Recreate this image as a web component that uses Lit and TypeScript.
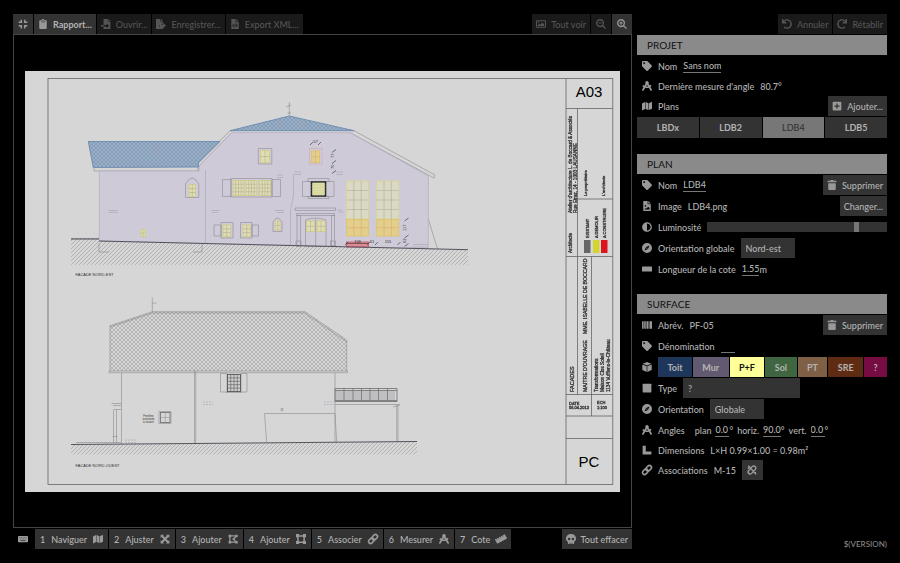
import { LitElement, html, svg, css, nothing } from "lit";
import { customElement, property, state } from "lit/decorators.js";
import { classMap } from "lit/directives/class-map.js";

const undoShape = svg`<path transform="scale(.03125)" d="M212.333 224.333H12c-6.627 0-12-5.373-12-12V12C0 5.373 5.373 0 12 0h48c6.627 0 12 5.373 12 12v78.112C117.773 39.279 184.26 7.47 258.175 8.007c136.906.994 246.448 111.623 246.157 248.532C504.041 393.258 393.12 504 256.333 504c-64.089 0-122.496-24.313-166.51-64.215-5.099-4.622-5.334-12.554-.467-17.42l33.967-33.967c4.474-4.474 11.662-4.717 16.401-.525C170.76 415.336 211.58 432 256.333 432c97.268 0 176-78.716 176-176 0-97.267-78.716-176-176-176-58.496 0-110.28 28.476-142.274 72.333h98.274c6.627 0 12 5.373 12 12v48c0 6.627-5.373 12-12 12z"/>`;

const ICONS: Record<string, unknown> = {
  compress: svg`<path d="M4 1h2.500v5.500H1V4h3zM9.500 1H12v3h3v2.500H9.500zM1 9.500h5.500V15H4v-3H1zM9.500 9.500H15V12h-3v3H9.500z"/>`,
  clipboard: svg`<path fill-rule="evenodd" d="M3.500 2H6a2 2 0 0 1 4 0h2.500A1.500 1.500 0 0 1 14 3.500v11a1.500 1.500 0 0 1-1.500 1.500h-9A1.500 1.500 0 0 1 2 14.500v-11A1.500 1.500 0 0 1 3.500 2zM8 1.300a.8.8 0 1 0 0 1.600.8.8 0 0 0 0-1.600zM5 4v1h6V4z"/>`,
  open: svg`<path fill-rule="evenodd" d="M4 0h7v4h4v12H4v-4h5v2.500L13 11 9 7v2.500H4zM12 0l3 3h-3zM0 9.500h4V12H0z"/>`,
  save: svg`<path fill-rule="evenodd" d="M0 0h7v4h4v3H9.500v2.500H5V12h6v4H0zM8 0l3 3H8zM11 6l5 4.500-5 4.500v-3H6V9.500h5z"/>`,
  code: svg`<path fill-rule="evenodd" d="M2 0h7v5h5v11H2zM10 0l4 4h-4zM6 7.500 3.500 10.300 6 13l.9-.9-1.700-1.800 1.700-1.800zm4 0-.9 1 1.700 1.800-1.700 1.800.9.900 2.500-2.700zM8.200 7 7 13.500l.9.200L9.100 7.200z"/>`,
  image: svg`<path fill-rule="evenodd" d="M1.500 2h13A1.500 1.500 0 0 1 16 3.500v9a1.500 1.500 0 0 1-1.500 1.500h-13A1.500 1.500 0 0 1 0 12.500v-9A1.500 1.500 0 0 1 1.500 2zM1.700 3.700v8.600h12.600V3.700zM3 11V9.500l2-2 1.500 1.500 3.500-3.500 3 3V11zM4.300 4.500a1.200 1.200 0 1 1 0 2.400 1.200 1.200 0 0 1 0-2.400z"/>`,
  zoomOut: svg`<path fill-rule="evenodd" d="M6.500 0a6.500 6.500 0 0 1 5.200 10.400L16 14.600 14.600 16l-4.300-4.200A6.500 6.500 0 1 1 6.500 0zm0 2.300a4.200 4.200 0 1 0 0 8.400 4.200 4.200 0 0 0 0-8.400zM4 5.700h5v1.600H4z"/>`,
  zoomIn: svg`<path fill-rule="evenodd" d="M6.500 0a6.500 6.500 0 0 1 5.200 10.400L16 14.600 14.600 16l-4.300-4.200A6.500 6.500 0 1 1 6.500 0zm0 2.300a4.200 4.200 0 1 0 0 8.400 4.200 4.200 0 0 0 0-8.400zM5.700 4h1.600v1.700H9v1.600H7.300V9H5.700V7.300H4V5.700h1.700z"/>`,
  undo: undoShape,
  redo: svg`<g transform="matrix(-1 0 0 1 16 0)">${undoShape}</g>`,
  tag: svg`<path transform="scale(.03125)" d="M0 252.118V48C0 21.490 21.490 0 48 0h204.118a48 48 0 0 1 33.941 14.059l211.882 211.882c18.745 18.745 18.745 49.137 0 67.882L293.823 497.941c-18.745 18.745-49.137 18.745-67.882 0L14.059 286.059A48 48 0 0 1 0 252.118zM112 64c-26.510 0-48 21.490-48 48s21.490 48 48 48 48-21.490 48-48-21.490-48-48-48z"/>`,
  drafting: svg`<path d="M8 0a2.900 2.900 0 0 1 2.500 4.300l1.700 3 1.700-1.300 1.500 1.700-2 1.700 2.400 4.300-.3 2.300-2.100-.9-2.500-4.300a8 8 0 0 1-5.800 0l-2.500 4.300-2.100.9-.3-2.300 2.200-3.900L.5 8.300 1.900 6.500l1.900 1 1.700-3.200A2.900 2.900 0 0 1 8 0zM6.400 8.600a6 6 0 0 0 3.200 0L8 5.800z"/>`,
  map: svg`<path d="M0 4 4.900 1.500v11.300L0 15zM5.700 1.500l4.600 1.900v11.100l-4.600-1.800zM11.100 3.400 16 1v11.300l-4.900 2.200z"/>`,
  plus: svg`<path fill-rule="evenodd" d="M2.500 1h11A1.500 1.500 0 0 1 15 2.500v11a1.500 1.500 0 0 1-1.500 1.500h-11A1.500 1.500 0 0 1 1 13.500v-11A1.500 1.500 0 0 1 2.500 1zM7 4v3H4v2h3v3h2V9h3V7H9V4z"/>`,
  trash: svg`<path d="M2 5h12v9.500a1.500 1.500 0 0 1-1.500 1.500h-9A1.500 1.500 0 0 1 2 14.500zM1 1h4.200L6 0h4l.8 1H15v2.500H1z"/>`,
  fileImage: svg`<path fill-rule="evenodd" d="M2 0h7v5h5v11H2zM10 0l4 4h-4zM5.500 6.500a1.300 1.300 0 1 0 0 2.600 1.300 1.300 0 0 0 0-2.600zM4 13.500h8V11l-2-2-3.500 3.300L5.500 11.500 4 12.700z"/>`,
  adjust: svg`<path transform="scale(.03125)" d="M8 256c0 136.966 111.033 248 248 248s248-111.034 248-248S392.966 8 256 8 8 119.033 8 256zm248 184V72c101.705 0 184 82.311 184 184 0 101.705-82.311 184-184 184z"/>`,
  compass: svg`<path fill-rule="evenodd" d="M8 0a8 8 0 1 1 0 16A8 8 0 0 1 8 0zm4 4L6.500 6.500 4 12l5.500-2.500zM8 7a1 1 0 1 1 0 2 1 1 0 0 1 0-2z"/>`,
  ruler: svg`<path d="M1 4h14a1 1 0 0 1 1 1v6a1 1 0 0 1-1 1H1a1 1 0 0 1-1-1V5a1 1 0 0 1 1-1z"/>`,
  barcode: svg`<path d="M0 2h1.500v12H0zM2.200 2h2.300v12H2.200zM5.200 2h1.500v12H5.200zM7.400 2h2.300v12H7.400zM10.400 2h1.600v12h-1.600zM12.700 2H16v12h-3.300z"/>`,
  cube: svg`<path d="M8 0 15 2.700 8 5.500 1 2.700zM.5 3.800 7.500 6.600v9.200L.5 12.800zM15.500 3.800v9l-7 3V6.600z"/>`,
  square: svg`<path d="M2 1h12a1 1 0 0 1 1 1v12a1 1 0 0 1-1 1H2a1 1 0 0 1-1-1V2a1 1 0 0 1 1-1z"/>`,
  angle: svg`<path d="M1 1h5v9.500h9V15H1z"/>`,
  link: svg`<g fill="none" stroke="currentColor" stroke-width="2.600" transform="rotate(-45 8 8)"><rect x="-.8" y="4.700" width="9.800" height="6.600" rx="3.300"/><rect x="7" y="4.700" width="9.800" height="6.600" rx="3.300"/></g>`,
  unlink: svg`<g fill="none" stroke="currentColor" stroke-width="2.300"><path d="M6 5.200 8.600 2.600a3.100 3.100 0 0 1 4.600 0 3.200 3.200 0 0 1 0 4.600L10.700 9.700M10 10.700l-2.600 2.700a3.200 3.200 0 0 1-4.600-4.600l2.500-2.500M2 1l12.500 14M11 12.500h3.500M2.500 3.500v3"/></g>`,
  keyboard: svg`<path fill-rule="evenodd" d="M1 3h14a1 1 0 0 1 1 1v8a1 1 0 0 1-1 1H1a1 1 0 0 1-1-1V4a1 1 0 0 1 1-1zM2 5v1h1V5zm2.700 0v1h1V5zm2.700 0v1h1V5zM10 5v1h1V5zm2.800 0v1h1V5zM3.400 7.400v1h1v-1zm2.700 0v1h1v-1zm2.700 0v1h1v-1zm2.700 0v1h1v-1zM4 9.900v1h8v-1z"/>`,
  expand: svg`<path d="M1 1h5.500L4.900 2.600 8 5.700l3.100-3.100L9.500 1H15v5.500l-1.600-1.600L10.300 8l3.100 3.100L15 9.500V15H9.500l1.600-1.600L8 10.300l-3.100 3.100L6.500 15H1V9.500l1.600 1.600L5.700 8 2.600 4.900 1 6.500z"/>`,
  polygon: svg`<path d="M3 4v8M4 3h8M4 13h8M12.500 4 9 8l3.500 4.500" fill="none" stroke="currentColor" stroke-width="2"/><path d="M1 1h4v4H1zM11.500 1h4v4h-4zM1 11h4v4H1zM11.500 11h4v4h-4zM7.500 6.500h3v3h-3z"/>`,
  vector: svg`<path d="M3 3h10v10H3z" fill="none" stroke="currentColor" stroke-width="2.400"/><path d="M0 0h5v5H0zM11 0h5v5h-5zM0 11h5v5H0zM11 11h5v5h-5z"/>`,
  rulerTilt: svg`<path transform="rotate(-28 8 8)" d="M-1 4h2.600v2h1.200V4h2.300v2h1.200V4h2.300v2h1.200V4h2.300v2h1.200V4H17v8H-1z"/>`,
  skull: svg`<path fill-rule="evenodd" d="M8 0c4.500 0 8 3.100 8 7 0 2.300-1.200 4.200-3 5.500V15a1 1 0 0 1-1 1h-1.700v-2H9v2H7v-2H5.700v2H4a1 1 0 0 1-1-1v-2.500C1.200 11.200 0 9.300 0 7c0-3.900 3.500-7 8-7zM5 6a2 2 0 1 0 0 4 2 2 0 0 0 0-4zm6 0a2 2 0 1 0 0 4 2 2 0 0 0 0-4z"/>`,
};

const icon = (name: string) =>
  html`<svg class="icon" viewBox="0 0 16 16" aria-hidden="true">${ICONS[name]}</svg>`;

/* Window with a regular grid of glazing bars. */
const pane = (x: number, y: number, w: number, h: number, cols: number, rows: number, kind = "") => {
  let d = "";
  for (let c = 1; c < cols; c++) d += `M${x + (w * c) / cols} ${y}v${h}`;
  for (let r = 1; r < rows; r++) d += `M${x} ${y + (h * r) / rows}h${w}`;
  return svg`<rect class="pane ${kind}" x=${x} y=${y} width=${w} height=${h} /><path class="bars ${kind}" d=${d} />`;
};

const up = (x: number, y: number, size: number, text: string, cls = "") =>
  svg`<text class="up ${cls}" font-size=${size} transform="translate(${x} ${y}) rotate(-90)">${text}</text>`;

@customElement("facade-sheet")
export class FacadeSheet extends LitElement {
  static styles = css`
    :host { display: block; }
    svg { display: block; width: 100%; height: auto; font-family: "Liberation Sans", Arial, sans-serif; }
    .paper { fill: #d6d6d6; }
    .frame { fill: none; stroke: #666; stroke-width: 0.8; }
    .line { fill: none; stroke: #8c8c90; stroke-width: 0.6; }
    .soft { fill: none; stroke: #a5a3b0; stroke-width: 0.6; }
    .rail { fill: none; stroke: #777; stroke-width: 0.9; }
    .ground { fill: none; stroke: #55525c; stroke-width: 1; }
    .wall { fill: #cfcad7; stroke: #aca4be; stroke-width: 0.6; }
    .roof { fill: #9bafc6; stroke: #5f83aa; stroke-width: 0.8; }
    .pane { fill: #deddb4; stroke: #d2cd86; stroke-width: 0.9; }
    .pane.orange { fill: #e2cf8b; stroke: #dfc46c; }
    .pane.pale { fill: #d9d9c4; stroke: #dcd698; }
    .pane.active { fill: #e2e2b0; stroke: #222; stroke-width: 1.4; }
    .pane.plain { fill: #d6d6d6; stroke: #777; }
    .pane.dark { fill: #d0d0d0; stroke: #555; }
    .bars { fill: none; stroke: #a9a88e; stroke-width: 0.5; }
    .bars.active { stroke: #cbcb8a; }
    .bars.orange { stroke: #e0a070; }
    .bars.dark { stroke: #666; stroke-width: 0.7; }
    .bars.plain { stroke: #888; }
    .pink { fill: none; stroke: #d0aebb; stroke-width: 0.7; }
    .red { fill: #e08a94; stroke: #c25060; stroke-width: 0.8; }
    .dim { fill: none; stroke: #444; stroke-width: 0.7; }
    text { fill: #333; }
    .title { fill: #000; font-size: 15px; text-anchor: middle; }
    .caption { font-size: 4px; }
    .note { font-size: 3px; text-anchor: middle; }
    .num { font-size: 4px; text-anchor: middle; }
    .faded { filter: blur(0.5px); }
    .faded text { stroke: #333; stroke-width: 0.3; }
  `;

  render() {
    return html`<svg viewBox="25 71 595 421" role="img" aria-label="Façades nord-est et nord-ouest">
      <defs>
        <pattern id="tiles" width="4" height="4" patternUnits="userSpaceOnUse">
          <path d="M0 0l4 4M4 0l-4 4" stroke="#7390b0" stroke-width=".6" />
        </pattern>
        <pattern id="slates" width="4" height="4" patternUnits="userSpaceOnUse">
          <path d="M0 0l4 4M4 0l-4 4" stroke="#a0a0a0" stroke-width=".6" />
        </pattern>
        <pattern id="earth" width="4" height="4" patternUnits="userSpaceOnUse">
          <path d="M0 4l4-4" stroke="#999" stroke-width=".6" />
        </pattern>
      </defs>
      <rect class="paper" x="25" y="71" width="595" height="421" />
      <rect class="frame" x="48" y="78.500" width="564.800" height="406" />
      <path class="frame" d="M566 78.500V484.500M566 108.500H612.800M577.500 108.500V394.500M577.500 199H612.800M566 256.500H612.800M591.500 256.500V416M566 394.500H612.800M566 416H612.800M566 438.500H612.800" />
      <text class="title" x="589" y="97">A03</text>
      <text class="title" x="589" y="466.500">PC</text>

      <g class="faded">
        ${up(571.5, 213, 4.700, "Atelier d'architecture L. de Boccard & Associés")}
        ${up(576.5, 213, 4.700, "Rue Etraz, 14 - 1003 LAUSANNE")}
        ${up(571.5, 253, 4.500, "Architecte")}
        ${up(587, 196, 4, "Le propriétaire")}
        ${up(605, 196, 4, "L'architecte")}
        ${up(589, 238, 4, "EXISTANT")}
        ${up(597.5, 238, 4, "A DEMOLIR")}
        ${up(606, 238, 4, "A CONSTRUIRE")}
        ${up(574, 392, 5.500, "FACADES")}
        ${up(586.5, 392, 5.200, "MAITRE D'OUVRAGE")}
        ${up(586.5, 334, 5.200, "MME. ISABELLE DE BOCCARD")}
        ${up(598, 392, 4.700, "Transformations")}
        ${up(604, 392, 4.700, "Maison Clos Soleil")}
        ${up(610, 392, 4.700, "1134 Vufflens-le-Château")}
        <text x="569" y="404.500" font-size="4">DATE</text>
        <text x="569" y="409" font-size="4">06.04.2013</text>
        <text x="597" y="404" font-size="4">ECH</text>
        <text x="597" y="408.500" font-size="4">1:100</text>
        <rect x="584" y="240" width="6.500" height="13" fill="#666" />
        <rect x="593" y="240" width="6.500" height="13" fill="#d4d431" />
        <rect x="601" y="240" width="6.500" height="13" fill="#dc1420" />
      </g>

      <path d="M71 239H99V241L468 250V264.700H71z" fill="url(#earth)" />
      <path class="line" d="M94 168V171H199V166L231.700 132.700M230 130.700 198 163V171M350 132.700 434 178 435 175 354 130.700M428.300 219 437.500 249M289.300 102V116M286 107l5-2M287.500 113h3.500M99 243v9h10M202 243v9h-9" />
      <path class="wall" d="M99.300 171H199V166L231.700 132.700H350L428.300 176V248.500L99.300 241z" />
      ${["M88.300 141.500H220L198.300 163V167L93.300 167.500z", "M230 130.700 289.300 116 354 130.700z"].map(
        (d) => svg`<path class="roof" d=${d} /><path d=${d} fill="url(#tiles)" />`,
      )}
      <path class="soft" d="M205.500 170V243M293.500 174.500V195L290.500 210V246M153 148h7v5h-7zM277 121h7v5h-7zM298 121h7v5h-7zM108 210.500h10M109 212.500h9M211 210.500h9M212 212.500h6M275 210.500h9M277 212.500h7M277 175h6M277 177.500h6M294 172h7M294 174.500h7M336 172h7M336 174.500h7M337 210h5M338 212h6M413 244.500h15M413 247h15" />
      <path class="line" d="M71 238.500H99M258.300 148.500h13.500v15.500h-13.500zM231 178.500h41V197H231zM222.500 179.500H231v17h-8.500zM272 179.500h8.500v17H272zM185.500 197.500V184q6.700-12 13.300 0v13.500zM221 222.500h12V238h-12zM214 225h7v11h-7zM240.500 222.500h11.500V238h-11.500zM252 225h6.500v11H252zM273 231.500V222q4.500-8 9 0v9.500zM302.500 181.500H311v15h-8.500zM326 181.500h8v15h-8zM308 178.500h21v3h-21zM308 196.500h21v2h-21zM295 208h40.500v2.500H295zM296.500 213.500h38v2h-38zM297 215.500h3.500V246H297zM331.500 215.500h3V246h-3zM296 241h5v5h-5zM330.500 241h5v5h-5zM305.500 246.500V220q10-4 20.500 0v26.500zM315.700 219v28" />
      ${pane(260.5, 150.500, 9, 12, 2, 2)} ${pane(233, 180.500, 11, 15, 4, 4)}
      ${pane(246, 180.500, 11, 15, 4, 4)} ${pane(259.5, 180.500, 11, 15, 4, 4)}
      ${pane(189, 184.500, 6.500, 12, 2, 3)} ${pane(140.5, 229.500, 5, 7, 2, 2)}
      ${pane(223, 225, 7.500, 11.500, 2, 3)} ${pane(243, 225, 7.500, 11.500, 2, 3)}
      ${pane(275.5, 221, 4.500, 9, 2, 2)} ${pane(306.5, 221, 8, 10.500, 2, 2)}
      ${pane(317, 221, 8, 10.500, 2, 2)}
      <rect class="pink" x="309.500" y="148.500" width="12.500" height="15.500" />
      ${pane(311.5, 151, 8, 11.500, 2, 2, "orange")}
      ${pane(311.5, 182, 14, 14, 5, 5, "active")}
      ${pane(346.5, 181, 22, 38, 3, 4, "pale")} ${pane(346.5, 219.500, 22, 16.500, 3, 2, "orange")}
      ${pane(376.7, 181, 22, 38, 3, 4, "pale")} ${pane(376.7, 219.500, 22, 16.500, 3, 2, "orange")}
      <rect class="red" x="346.500" y="242" width="22" height="5" />
      <path class="dim" d="M346.500 243.500h22M345 245l3-3M367 245l3-3M375 245l3-3M397.500 245l3-3M310 145l3-3M318 145l3-3M332 152.500l4-3M332 163.500l4-3M332 173.500l4-3M404.500 221l4-3M404.500 238l4-3M404.500 246.500l4-3" />
      <text class="num" x="315.500" y="143">57</text>
      <text class="num" x="357.500" y="242.500">158</text>
      <text class="num" x="372" y="242.500">61</text>
      <text class="num" x="388" y="242.500">155</text>
      ${up(333.5, 158, 4, "77")} ${up(333.5, 169, 4, "70")}
      ${up(405.5, 231, 4, "117")} ${up(405.5, 243, 4, "62")}
      <path class="ground" d="M71 239H99M99 241 468 249.700" />
      <text class="caption" x="75.500" y="275.700">FACADE NORD-EST</text>

      <path d="M71 444.500 195 443.500 417 441.500V454.500H71z" fill="url(#earth)" />
      <path d="M110 325.700 152.300 311.700H305L346.700 340V371H110z" fill="url(#slates)" />
      <path class="line" d="M110 371V325.700L152.300 311.700H305L346.700 340V371M110 327 152.300 313H304.500L346.700 342M109 371H347.500V372.700H109zM152.300 297.500V312M152.300 303h4M121.500 373V444M194.500 371V443.500M195.700 371V443.500M335 373V442.300M220.500 373.500h6.500v18.500h-6.500zM241 373.500h6v18.500h-6zM226 392.500h16M264.500 413.500H335M264.500 413.500 266.700 442M335 413.500 336.700 442M281 408.500h2v2h-2zM111.500 403.500H121.500M113 405.500h8M113.500 409.500h8M113.500 410V443M116.500 410V443M112.500 436.500h5M76 442.500H121M335 404.500H400M396.700 405V441M398 405V441M393 407l7-2" />
      <path class="soft" d="M203 402h10M203 404.500h10M324 402h10M324 404.500h10M125 440h11M125 442.500h11" stroke-dasharray="2 1" />
      ${pane(227.5, 374.500, 13, 17, 4, 5, "dark")} ${pane(160.5, 412.500, 9.500, 10, 2, 2, "plain")}
      <path class="line" d="M159 411.500h12v12h-12z" />
      <path class="rail" d="M335 388.500h62v13h-62zM335 390.500h62M335 400.500h62M344 388v13M353 388v13M361.500 388v13M370 388v13M378.500 388v13M387.500 388v13" />
      <path class="line" d=${Array.from({ length: 30 }, (_, i) => `M${336 + i * 2} 391v10`).join("")} />
      <text class="note" x="148.500" y="416.500">Fenêtre</text>
      <text class="note" x="148.500" y="419.500">existante</text>
      <text class="note" x="148.500" y="422.500">à rouvrir</text>
      <path class="ground" d="M71 444.500 195 443.500 417 441.500" />
      <text class="caption" x="75.500" y="466.700">FACADE NORD-OUEST</text>
    </svg>`;
  }
}

const shared = css`
  * { box-sizing: border-box; }
  button, input, select { font: inherit; color: inherit; margin: 0; border: 0; border-radius: 0; background: none; }
  .icon { display: block; flex: none; width: 10px; height: 10px; fill: currentColor; color: #999; overflow: visible; }
  .btn { display: flex; align-items: center; justify-content: center; gap: 5px; height: 20px; min-width: 20px; padding: 0 4px; background: #333; color: #b4b4b4; white-space: nowrap; cursor: pointer; }
  .btn:disabled { background: #1a1a1a; color: #555; cursor: default; }
  .btn:disabled .icon { color: #555; }
  .group { display: flex; gap: 1px; }
`;

@customElement("plan-inspector")
export class PlanInspector extends LitElement {
  @state() private plan = "LDB4";
  @state() private kind = "P+F";

  static styles = [
    shared,
    css`
      :host { display: flex; flex-direction: column; flex: 1; }
      .head { margin: 0; height: 21px; padding: 0 10px; border-bottom: 1px solid #000; background: #8a8a8a; color: #111; font-size: 10px; line-height: 20px; font-weight: 400; }
      .section { margin-bottom: 15px; }
      .row { display: flex; align-items: center; height: 20px; padding-left: 5px; gap: 6px; }
      .row.tall { height: 21px; padding-bottom: 1px; }
      .row .push { margin-left: auto; }
      .row .roomy { min-width: 21px; }
      .name { white-space: nowrap; }
      .edit { field-sizing: content; min-width: 14px; height: 13px; padding: 0; border-bottom: 1px solid #777; }
      .value { display: flex; align-items: center; }
      .angles { display: flex; gap: 4px; margin-left: 4px; }
      .tabs { display: grid; grid-template-columns: repeat(4, 1fr); gap: 1px; padding: 1px 0; }
      .kinds { display: flex; gap: 1px; flex: 1; }
      .choice { position: relative; display: flex; align-items: center; justify-content: center; height: 20px; background: #333; color: #b4b4b4; font-weight: 700; cursor: pointer; }
      .choice input { position: absolute; inset: 0; appearance: none; cursor: pointer; }
      .kinds .choice { flex: 1 1 auto; padding: 0 8px; }
      .tabs .choice { height: 21px; }
      .tabs .on { background: #777; color: #333; font-weight: 500; }
      .kinds .toit { background: #1d3659; }
      .kinds .mur { background: #625a70; }
      .kinds .pf { background: #8d8d55; }
      .kinds .pf.on { background: #ffff99; color: #111; }
      .kinds .sol { background: #3f6640; }
      .kinds .pt { background: #7f6046; }
      .kinds .sre { background: #5f2c13; }
      .kinds .unknown { background: #770c42; }
      .pick { appearance: none; height: 20px; width: 54px; padding: 0 5px; background: #333; color: #b4b4b4; }
      .pick.wide { width: 117px; }
      .slider { appearance: none; flex: 1; min-width: 0; height: 10px; background: #333; }
      .slider::-webkit-slider-thumb { appearance: none; width: 5px; height: 10px; background: #777; }
    `,
  ];

  private choice(group: string, value: string, current: string, cls: string, pick: (v: string) => void) {
    const on = value === current;
    return html`<label class=${classMap({ choice: true, on, [cls || "choice"]: true })}>
      <input type="radio" name=${group} .checked=${on} @change=${() => pick(value)} />${value}
    </label>`;
  }

  private edit(id: string, value: string, label?: string) {
    return html`<input class="edit" id=${id} .value=${value} aria-label=${label ?? nothing} />`;
  }

  render() {
    const kinds = [["Toit", "toit"], ["Mur", "mur"], ["P+F", "pf"], ["Sol", "sol"], ["PT", "pt"], ["SRE", "sre"], ["?", "unknown"]];
    return html`
      <section class="section">
        <h2 class="head">PROJET</h2>
        <div class="row">${icon("tag")}<label class="name" for="project">Nom</label>${this.edit("project", "Sans nom")}</div>
        <div class="row">${icon("drafting")}<span class="name">Dernière mesure d'angle</span><output>80.7°</output></div>
        <div class="row">${icon("map")}<span class="name">Plans</span><button class="btn push">${icon("plus")}Ajouter...</button></div>
        <div class="tabs">
          ${["LBDx", "LDB2", "LDB4", "LDB5"].map((p) => this.choice("plan", p, this.plan, "", (v) => (this.plan = v)))}
        </div>
      </section>

      <section class="section">
        <h2 class="head">PLAN</h2>
        <div class="row tall">${icon("tag")}<label class="name" for="plan">Nom</label>${this.edit("plan", "LDB4")}<button class="btn push">${icon("trash")}Supprimer</button></div>
        <div class="row tall">${icon("fileImage")}<span class="name">Image</span><span>LDB4.png</span><button class="btn push">Changer...</button></div>
        <div class="row tall">${icon("adjust")}<label class="name" for="light">Luminosité</label><input class="slider" id="light" type="range" min="0" max="100" value="84" /></div>
        <div class="row tall">${icon("compass")}<label class="name" for="north">Orientation globale</label><select class="pick" id="north"><option>Nord-est</option></select></div>
        <div class="row">${icon("ruler")}<label class="name" for="length">Longueur de la cote</label><span class="value">${this.edit("length", "1.55")}m</span></div>
      </section>

      <section class="section">
        <h2 class="head">SURFACE</h2>
        <div class="row tall">${icon("barcode")}<span class="name">Abrév.</span><span>PF-05</span><button class="btn push">${icon("trash")}Supprimer</button></div>
        <div class="row tall">${icon("tag")}<label class="name" for="label">Dénomination</label>${this.edit("label", "")}</div>
        <div class="row tall">${icon("cube")}
          <div class="kinds">${kinds.map(([k, c]) => this.choice("kind", k, this.kind, c, (v) => (this.kind = v)))}</div>
        </div>
        <div class="row tall">${icon("square")}<label class="name" for="type">Type</label><select class="pick wide" id="type"><option>?</option></select></div>
        <div class="row tall">${icon("compass")}<label class="name" for="facing">Orientation</label><select class="pick" id="facing"><option>Globale</option></select></div>
        <div class="row">${icon("drafting")}<span class="name">Angles</span>
          <span class="angles">
            <label for="a1">plan</label><span class="value">${this.edit("a1", "0.0")}°</span>
            <label for="a2">horiz.</label><span class="value">${this.edit("a2", "90.0")}°</span>
            <label for="a3">vert.</label><span class="value">${this.edit("a3", "0.0")}°</span>
          </span>
        </div>
        <div class="row">${icon("angle")}<span class="name">Dimensions</span><span>L×H 0.99×1.00 = 0.98m²</span></div>
        <div class="row">${icon("link")}<span class="name">Associations</span><span>M-15</span><button class="btn roomy" aria-label="Dissocier">${icon("unlink")}</button></div>
      </section>
    `;
  }
}

@customElement("app-root")
export class AppRoot extends LitElement {
  @property({ type: String }) version = "$(VERSION)";

  static styles = [
    shared,
    css`
      :host { display: flex; gap: 5px; min-height: 100vh; box-sizing: border-box; padding: 14px 13px; background: #000; color: #b4b4b4; font: 500 9px/13px Lato, "Noto Sans", sans-serif; }
      .work { flex: 1; min-width: 0; display: flex; flex-direction: column; }
      .side { width: 250px; flex: none; display: flex; flex-direction: column; }
      .bar { display: flex; justify-content: space-between; height: 20px; }
      .side .bar { justify-content: flex-end; margin-bottom: 1px; }
      .canvas { flex: 1; display: flex; align-items: center; border: 1px solid #444; margin-bottom: 1px; padding: 0 11px; }
      .canvas facade-sheet { flex: 1; min-width: 0; }
      .strong { font-weight: 700; }
      .tool { gap: 6px; padding: 0 5px; }
      .keys { display: flex; align-items: center; width: 21px; padding-left: 5px; }
      .version { color: #888; font-size: 8px; line-height: 10px; text-align: right; }
    `,
  ];

  render() {
    const tools = [["Naviguer", "map"], ["Ajuster", "expand"], ["Ajouter", "polygon"], ["Ajouter", "vector"], ["Associer", "link"], ["Mesurer", "drafting"], ["Cote", "rulerTilt"]];
    return html`
      <main class="work">
        <div class="bar">
          <div class="group">
            <button class="btn" aria-label="Réduire">${icon("compress")}</button>
            <button class="btn strong">${icon("clipboard")}Rapport...</button>
            <button class="btn" disabled>${icon("open")}Ouvrir...</button>
            <button class="btn" disabled>${icon("save")}Enregistrer...</button>
            <button class="btn" disabled>${icon("code")}Export XML...</button>
          </div>
          <div class="group">
            <button class="btn" disabled>${icon("image")}Tout voir</button>
            <button class="btn" disabled aria-label="Zoom arrière">${icon("zoomOut")}</button>
            <button class="btn" aria-label="Zoom avant">${icon("zoomIn")}</button>
          </div>
        </div>
        <div class="canvas"><facade-sheet></facade-sheet></div>
        <div class="bar">
          <div class="group">
            <span class="keys">${icon("keyboard")}</span>
            ${tools.map(([name, glyph], i) => html`<button class="btn tool"><span>${i + 1}</span><span>${name}</span>${icon(glyph)}</button>`)}
          </div>
          <button class="btn">${icon("skull")}Tout effacer</button>
        </div>
      </main>
      <aside class="side">
        <div class="bar"><div class="group">
          <button class="btn" disabled>${icon("undo")}Annuler</button>
          <button class="btn" disabled>${icon("redo")}Rétablir</button>
        </div></div>
        <plan-inspector></plan-inspector>
        <div class="version">${this.version}</div>
      </aside>
    `;
  }
}
